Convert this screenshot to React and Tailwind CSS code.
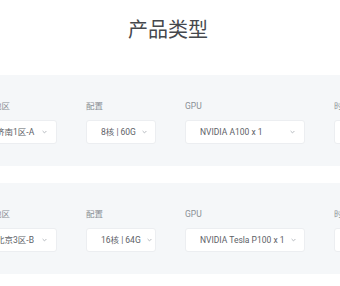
import React from 'react';

const rows = [
  { region: '济南1区-A', config: '8核 | 60G', gpu: 'NVIDIA A100 x 1' },
  { region: '北京3区-B', config: '16核 | 64G', gpu: 'NVIDIA Tesla P100 x 1' },
];

function Caret() {
  return (
    <svg width="5" height="4" viewBox="0 0 5 4" className="shrink-0 ml-[6px]">
      <path d="M0.6 1 L2.5 2.9 L4.4 1" fill="none" stroke="#b5b9be" strokeWidth="1" />
    </svg>
  );
}

function Field({ label, value, width, labelClass = '' }) {
  return (
    <div className="flex flex-col shrink-0" style={{ width }}>
      <div className={`h-[12px] leading-[12px] text-[8.5px] text-[#8a8f95] ${labelClass}`}>{label}</div>
      <div className="mt-[8px] h-[24px] bg-white border border-[#eceef1] rounded-[3px] pl-[14px] pr-[9px] flex items-center justify-between">
        <span className="text-[8.5px] text-[#5d6167] whitespace-nowrap">{value}</span>
        {value && <Caret />}
      </div>
    </div>
  );
}

export default function App() {
  return (
    <div className="w-[340px] h-[286px] overflow-hidden bg-white">
      <div className="w-[600px] -ml-[132px] pt-[16px] font-['Roboto','Noto_Sans_CJK_SC',sans-serif]">
        <h1 className="text-center text-[20px] leading-[28px] text-[#45484d] font-normal">产品类型</h1>

        <div className="mt-[31px] flex flex-col gap-[17px]">
          {rows.map((r) => (
            <div key={r.region} className="h-[91px] bg-[#f5f7f9] pt-[25px] pl-[113px] flex gap-[29px]">
              <Field label="地区" value={r.region} width={76} labelClass="ml-[12px]" />
              <Field label="配置" value={r.config} width={70} />
              <Field label="GPU" value={r.gpu} width={120} />
              <Field label="时长" value="" width={100} />
            </div>
          ))}
        </div>
      </div>
    </div>
  );
}
